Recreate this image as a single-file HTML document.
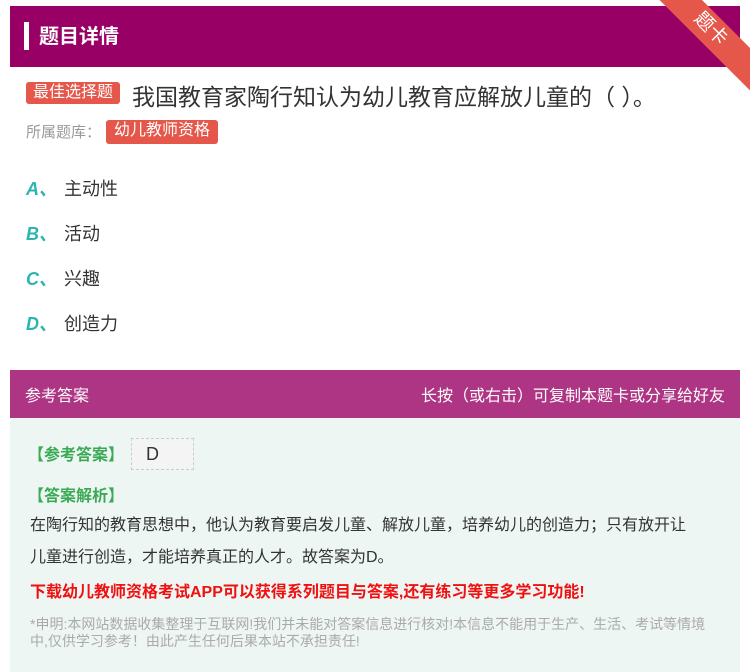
<!DOCTYPE html>
<html><head><meta charset="utf-8"><style>
*{margin:0;padding:0;box-sizing:border-box}
body{width:750px;height:672px;background:#fff;font-family:"Liberation Sans","Noto Sans CJK SC",sans-serif;position:relative;overflow:hidden;color:#333}
.abs{position:absolute;white-space:nowrap}
.hd{left:10px;top:6px;width:730px;height:61px;background:#990066}
.tag{background:#e5574a;color:#fff;border-radius:3px;font-size:16px;line-height:22px;padding:0 7px}
.opt{left:26px;font-size:18px}
.opt b{color:#2ab5b0;font-style:italic;font-family:"Liberation Sans",sans-serif;display:inline-block;width:38px}
</style></head><body>
<div class="abs hd"></div>
<div class="abs" style="left:24px;top:22px;width:5px;height:28px;background:#fff"></div>
<div class="abs" style="left:39px;top:20px;color:#fff;font-size:20px;font-weight:bold">题目详情</div>
<div class="abs" style="width:130px;height:30px;background:#e5574a;transform:rotate(45deg);transform-origin:0 0;left:680px;top:-22px"></div>
<div class="abs" style="left:693px;top:14px;color:#fff;font-size:19px;transform:rotate(45deg)">题卡</div>
<div class="abs tag" style="left:26px;top:82px">最佳选择题</div>
<div class="abs" style="left:132px;top:78px;font-size:23px;color:#333">我国教育家陶行知认为幼儿教育应解放儿童的（ ）。</div>
<div class="abs" style="left:26px;top:121px;font-size:15px;color:#999">所属题库：</div>
<div class="abs tag" style="left:106px;top:120px;padding:0 8px 2px">幼儿教师资格</div>
<div class="abs opt" style="top:175px"><b>A、</b>主动性</div>
<div class="abs opt" style="top:220px"><b>B、</b>活动</div>
<div class="abs opt" style="top:265px"><b>C、</b>兴趣</div>
<div class="abs opt" style="top:310px"><b>D、</b>创造力</div>
<div class="abs" style="left:10px;top:370px;width:730px;height:48px;background:#ad3584"></div>
<div class="abs" style="left:25px;top:382px;color:#fff;font-size:16px">参考答案</div>
<div class="abs" style="right:25px;top:382px;color:#fff;font-size:16px">长按（或右击）可复制本题卡或分享给好友</div>
<div class="abs" style="left:10px;top:418px;width:730px;height:254px;background:#eef6f4"></div>
<div class="abs" style="left:28px;top:441px;color:#3aaa55;font-size:16px;font-weight:bold">【参考答案】</div>
<div class="abs" style="left:131px;top:438px;width:63px;height:32px;background:#f4f4f4;border:1px dashed #ccc;font-size:18px;padding-left:14px;line-height:30px">D</div>
<div class="abs" style="left:28px;top:482px;color:#3aaa55;font-size:16px;font-weight:bold">【答案解析】</div>
<div class="abs" style="left:30px;top:510px;font-size:16px;color:#333;line-height:32px;white-space:normal;width:665px">在陶行知的教育思想中，他认为教育要启发儿童、解放儿童，培养幼儿的创造力；只有放开让儿童进行创造，才能培养真正的人才。故答案为D。</div>
<div class="abs" style="left:30px;top:578px;font-size:16px;color:#f01010;font-weight:bold">下载幼儿教师资格考试APP可以获得系列题目与答案,还有练习等更多学习功能!</div>
<div class="abs" style="left:30px;top:616px;font-size:14px;color:#aaa;line-height:17px;white-space:normal;width:690px">*申明:本网站数据收集整理于互联网!我们并未能对答案信息进行核对!本信息不能用于生产、生活、考试等情境中,仅供学习参考！由此产生任何后果本站不承担责任!</div>
</body></html>
